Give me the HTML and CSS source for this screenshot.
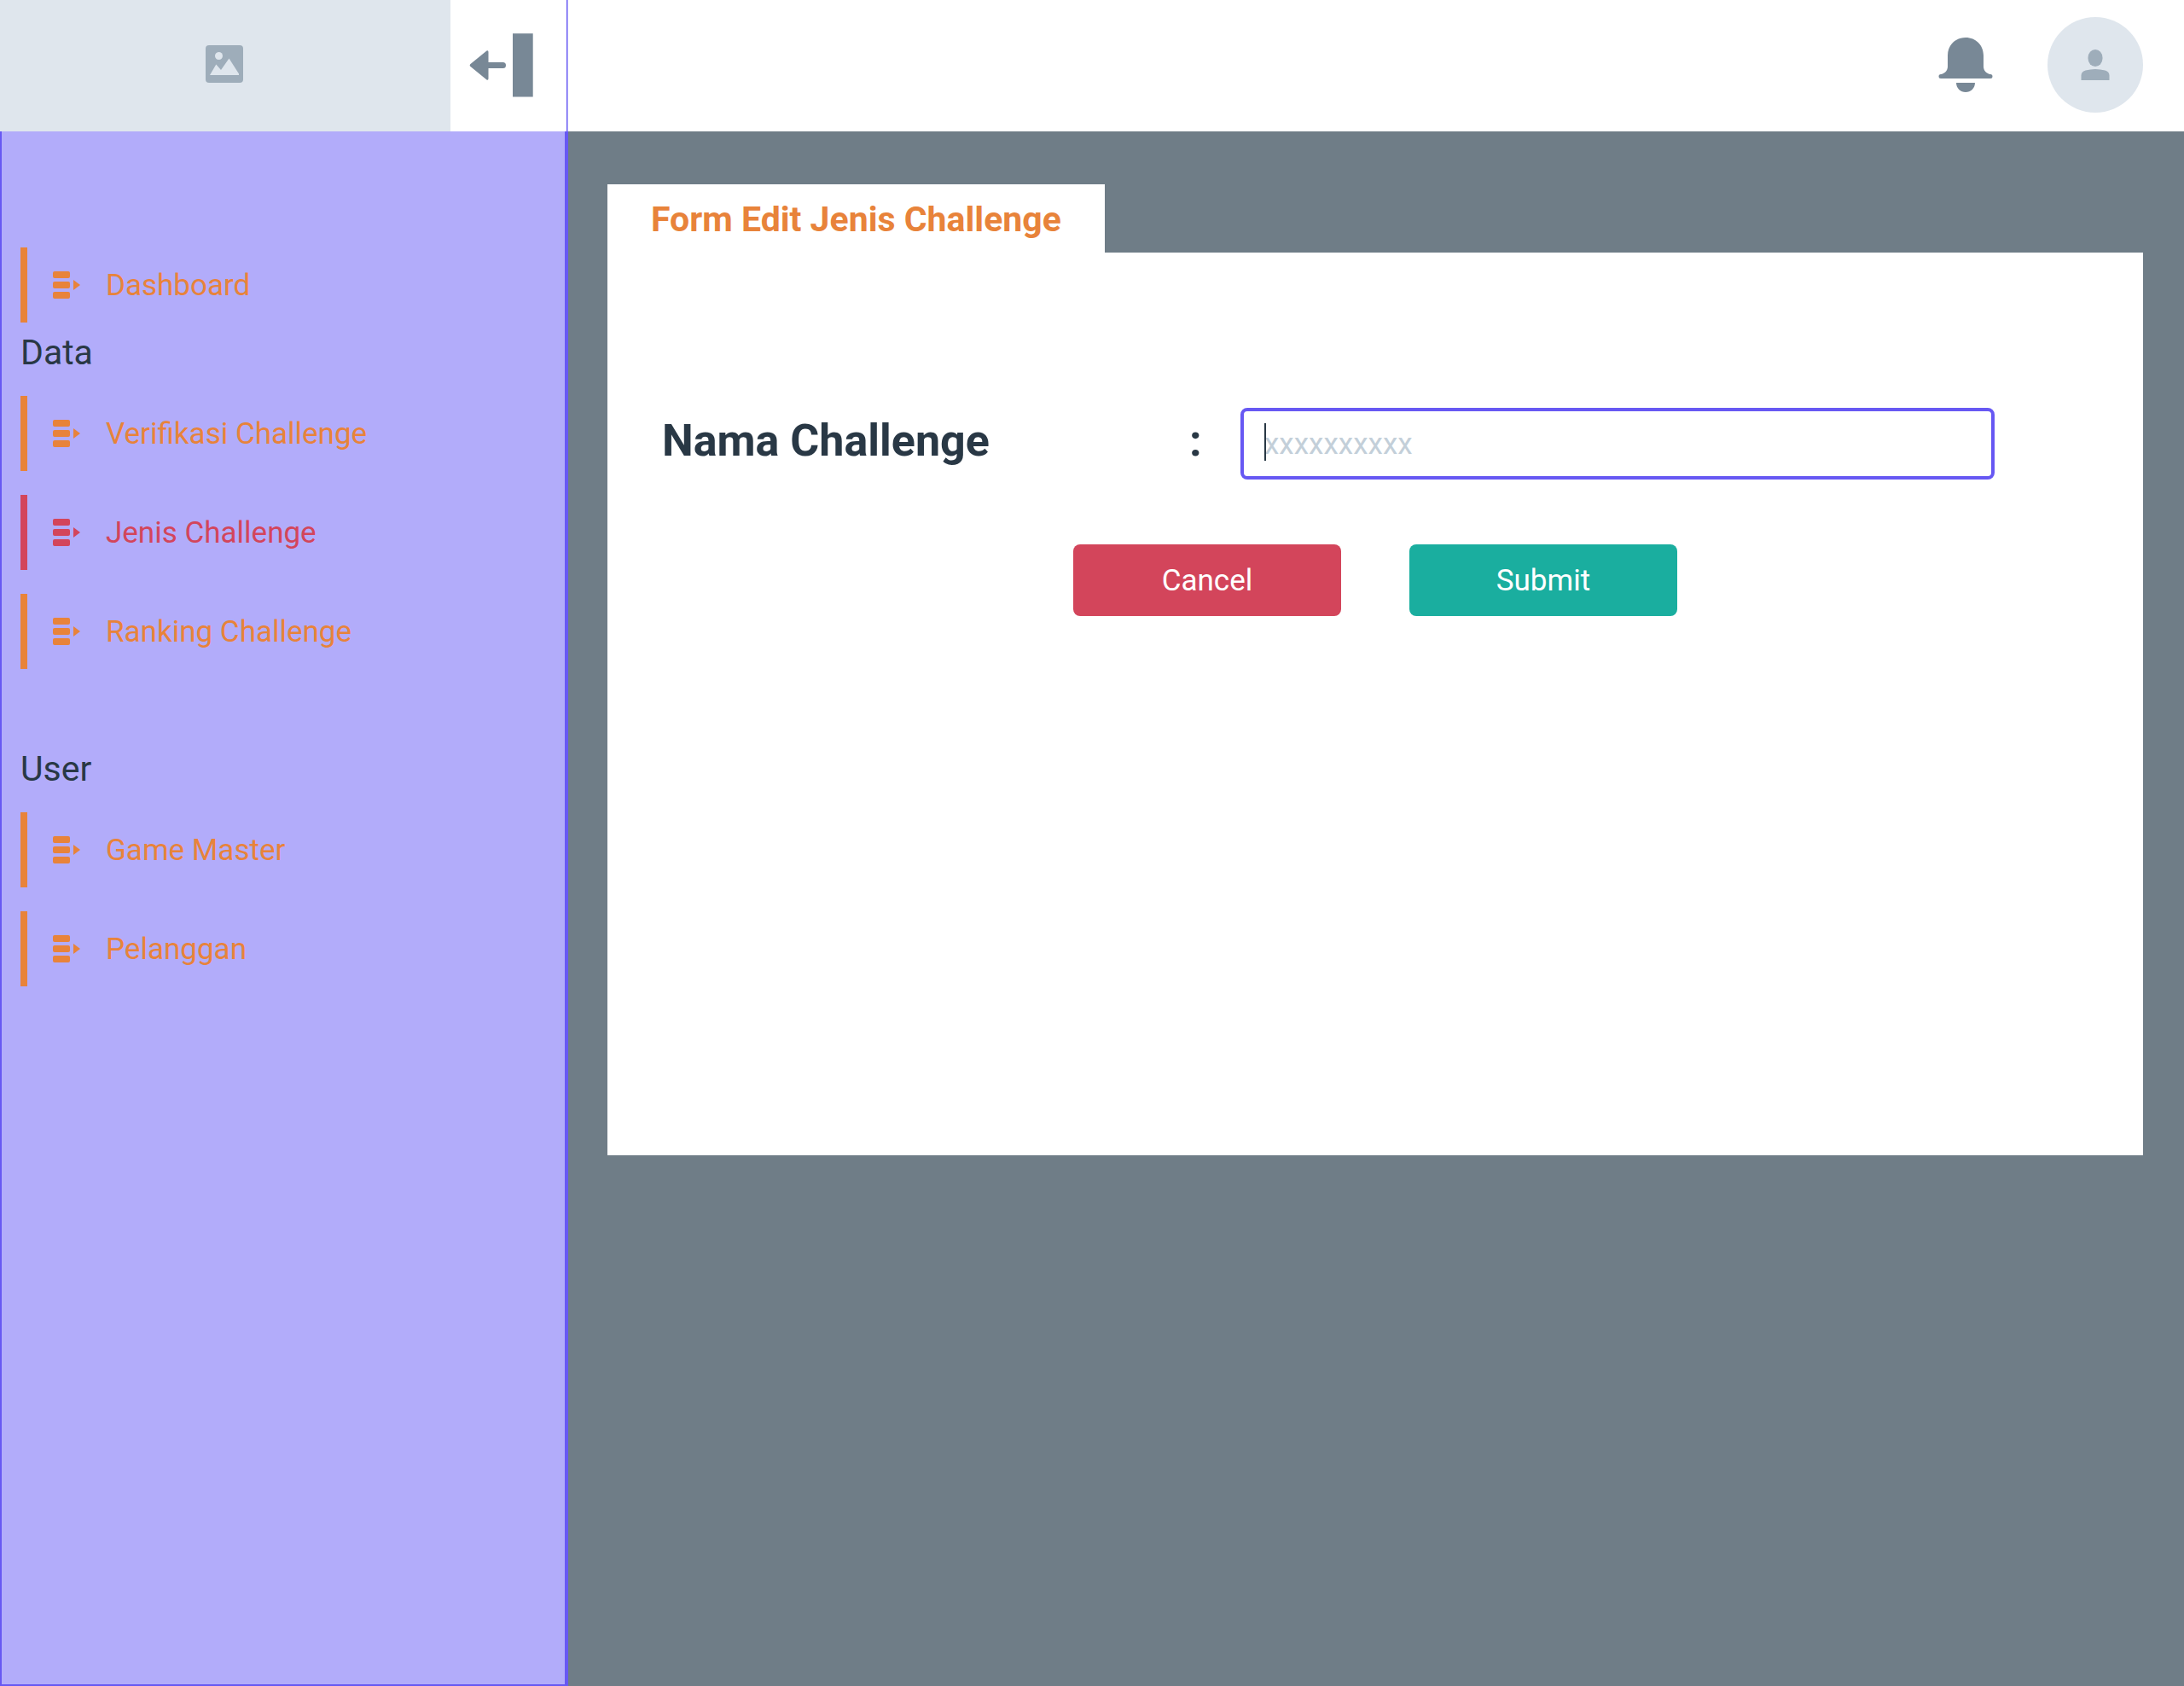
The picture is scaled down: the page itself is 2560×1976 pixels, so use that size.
FILE: index.html
```html
<!DOCTYPE html>
<html lang="id">
<head>
<meta charset="utf-8">
<meta name="viewport" content="width=device-width, initial-scale=1">
<title>Form Edit Jenis Challenge</title>
<link rel="stylesheet" href="styles.css">
</head>
<body>
<svg class="sprite" aria-hidden="true">
  <symbol id="menu-icon" viewBox="0 0 32 32">
    <rect width="20" height="8" rx="2"/>
    <rect y="12" width="20" height="8" rx="2"/>
    <rect y="24" width="20" height="8" rx="2"/>
    <path d="M24 10 32 16 24 22Z"/>
  </symbol>
</svg>
<div class="app">
  <header class="topbar">
    <div class="brand">
      <a class="logo" href="#" aria-label="Logo">
        <svg width="44" height="44" viewBox="0 0 44 44" aria-hidden="true">
          <rect class="logo-frame" width="44" height="44" rx="4"/>
          <circle class="logo-scene" cx="15.500" cy="12.500" r="4.500"/>
          <path class="logo-scene" d="M5 35 12.300 22.500 18 29 27.500 15.500 39 33.500V35Z"/>
        </svg>
      </a>
      <button class="collapse" type="button" aria-label="Tutup menu">
        <svg width="76" height="76" viewBox="0 0 76 76" aria-hidden="true">
          <path d="M1.200 36.300 20.500 20.500Q22.500 19.500 22.500 22V34H39.500A3.500 3.500 0 0 1 39.500 41H22.500V53Q22.500 55.500 20.500 54.500L1.200 38.700Q0 37.500 1.200 36.300Z"/>
          <path d="M51 .3H74.700V74.500H51Z"/>
        </svg>
      </button>
    </div>
    <div class="actions">
      <button class="bell" type="button" aria-label="Notifikasi">
        <svg width="64" height="64" viewBox="0 0 64 64" aria-hidden="true">
          <path d="M32 0C20 0 11 9 11 21V34C11 39 7 42.500 3 43A2.500 2.500 0 0 0 3 48H61A2.500 2.500 0 0 0 61 43C57 42.500 53 39 53 34V21C53 9 44 0 32 0Z"/>
          <path d="M21 53H43C43 59.500 38 64 32 64S21 59.500 21 53Z"/>
        </svg>
      </button>
      <button class="avatar" type="button" aria-label="Akun">
        <svg width="34" height="36" viewBox="0 0 34 36" aria-hidden="true">
          <rect x="8.500" width="17" height="20" rx="8.500" ry="9.500"/>
          <path d="M.5 36V30.500Q.5 26 5.500 24.500Q17 21.500 28.500 24.500Q33.500 26 33.500 30.500V36Z"/>
        </svg>
      </button>
    </div>
  </header>

  <nav class="sidebar">
    <ul class="menu">
      <li><a class="item" href="#"><svg class="item-icon"><use href="#menu-icon"/></svg>Dashboard</a></li>
    </ul>
    <h2 class="group">Data</h2>
    <ul class="menu">
      <li><a class="item" href="#"><svg class="item-icon"><use href="#menu-icon"/></svg>Verifikasi Challenge</a></li>
      <li><a class="item item-active" href="#" aria-current="page"><svg class="item-icon"><use href="#menu-icon"/></svg>Jenis Challenge</a></li>
      <li><a class="item" href="#"><svg class="item-icon"><use href="#menu-icon"/></svg>Ranking Challenge</a></li>
    </ul>
    <h2 class="group group-user">User</h2>
    <ul class="menu">
      <li><a class="item" href="#"><svg class="item-icon"><use href="#menu-icon"/></svg>Game Master</a></li>
      <li><a class="item" href="#"><svg class="item-icon"><use href="#menu-icon"/></svg>Pelanggan</a></li>
    </ul>
  </nav>

  <main class="content">
    <h1 class="tab">Form Edit Jenis Challenge</h1>
    <form class="panel">
      <div class="field">
        <label class="label" for="nama">Nama Challenge</label>
        <span class="colon">:</span>
        <div class="control">
          <input class="input" id="nama" type="text" placeholder="xxxxxxxxxx">
          <span class="caret"></span>
        </div>
      </div>
      <div class="buttons">
        <button class="button button-cancel" type="button">Cancel</button>
        <button class="button button-submit" type="submit">Submit</button>
      </div>
    </form>
  </main>
</div>
</body>
</html>
```
FILE: styles.css
```css
:root {
  --violet: #6758f3;
  --violet-soft: #b2acfa;
  --orange: #e8833a;
  --red: #d3455b;
  --teal: #1aae9f;
  --ink: #293845;
  --slate: #6f7d87;
  --icon: #788896;
  --icon-soft: #9eadba;
  --fill: #dfe6ed;
}

* {
  box-sizing: border-box;
}

body {
  margin: 0;
  font-family: Roboto, "Liberation Sans", sans-serif;
  font-size: 35px;
  color: var(--ink);
  background: var(--slate);
}

button,
input {
  font: inherit;
}

button {
  padding: 0;
  border: 0;
  background: none;
  cursor: pointer;
}

svg {
  display: block;
}

.sprite {
  position: absolute;
  width: 0;
  height: 0;
}

.app {
  display: grid;
  grid-template-columns: 666px 1fr;
  grid-template-rows: auto 1fr;
  min-height: 100vh;
}

/* Top bar */

.topbar {
  grid-column: 1 / -1;
  display: flex;
  justify-content: space-between;
  background: #fff;
}

.brand {
  display: flex;
  width: 665px;
  height: 154px;
  border-right: 1px solid var(--violet);
  box-shadow: 1px 0 var(--violet-soft);
}

.logo {
  display: flex;
  align-items: center;
  justify-content: center;
  width: 528px;
  padding: 0 2px 4px 0;
  background: var(--fill);
}

.logo-frame {
  fill: var(--icon-soft);
}

.logo-scene {
  fill: var(--fill);
}

.collapse {
  padding-left: 22px;
  fill: var(--icon);
}

.actions {
  display: flex;
  align-items: center;
  gap: 64px;
  padding: 0 48px 2px 0;
}

.bell {
  fill: var(--icon);
}

.avatar {
  display: flex;
  align-items: center;
  justify-content: center;
  width: 112px;
  height: 112px;
  border-radius: 50%;
  background: var(--fill);
  fill: var(--icon-soft);
}

/* Sidebar */

.sidebar {
  padding: 136px 22px 0;
  border: solid var(--violet);
  border-width: 0 4px 2px 2px;
  background: var(--violet-soft);
}

.menu {
  display: grid;
  gap: 28px;
  margin: 0;
  padding: 0;
  list-style: none;
}

.item {
  display: flex;
  align-items: center;
  gap: 30px;
  height: 88px;
  padding-left: 30px;
  border-left: 8px solid;
  color: var(--orange);
  text-decoration: none;
}

.item-active {
  color: var(--red);
}

.item-icon {
  width: 32px;
  height: 32px;
  fill: currentColor;
}

.group {
  margin: 10px 0 26px;
  font-size: 41px;
  font-weight: 400;
  line-height: 50px;
}

.group-user {
  margin-top: 92px;
}

/* Form */

.content {
  padding: 62px 48px 62px 46px;
}

.tab {
  width: fit-content;
  margin: 0;
  padding: 2px 51px 0;
  font-size: 41px;
  font-weight: 700;
  line-height: 78px;
  color: var(--orange);
  background: #fff;
}

.panel {
  display: grid;
  align-content: start;
  gap: 76px;
  min-height: 1058px;
  padding: 182px 64px 64px;
  background: #fff;
}

.field {
  display: grid;
  grid-template-columns: 618px 60px 1fr;
  padding-right: 110px;
}

.label,
.colon {
  font-size: 52px;
  font-weight: 700;
  line-height: 78px;
}

.control {
  position: relative;
}

.input {
  display: block;
  width: 100%;
  height: 84px;
  padding: 0 24px;
  border: 4px solid var(--violet);
  border-radius: 8px;
  outline: 0;
  color: var(--ink);
  background: #fff;
}

.input::placeholder {
  color: #c3cfd9;
  opacity: 1;
}

.caret {
  position: absolute;
  top: 18px;
  left: 28px;
  width: 2px;
  height: 44px;
  background: var(--ink);
}

.buttons {
  display: flex;
  justify-content: center;
  gap: 80px;
}

.button {
  width: 314px;
  height: 84px;
  border-radius: 8px;
  color: #fff;
}

.button-cancel {
  background: var(--red);
}

.button-submit {
  background: var(--teal);
}
```
